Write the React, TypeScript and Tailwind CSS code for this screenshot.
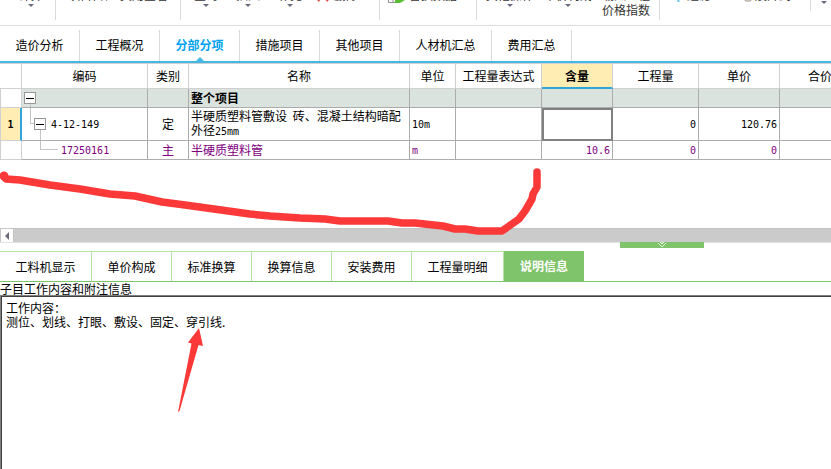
import type { ReactNode } from 'react';

const toolText = 'whitespace-nowrap text-[12px] leading-[14px] text-[#333]';

function Caret() {
  return (
    <svg width="6" height="3" viewBox="0 0 6 3" className="mt-[2px]" aria-hidden="true">
      <path d="M0 0h6L3 3z" fill="#6b6b80" />
    </svg>
  );
}

function Tool({ label, className, caret }: { label: string; className: string; caret?: boolean }) {
  return (
    <button type="button" className={`flex shrink-0 flex-col items-center ${toolText} ${className}`}>
      {label}
      {caret && <Caret />}
    </button>
  );
}

function Divider({ className }: { className: string }) {
  return <div className={`h-5 w-px shrink-0 bg-[#d9d9d9] ${className}`} />;
}

function Toolbar() {
  return (
    <div className="flex h-[26px] shrink-0 items-start overflow-hidden border-b border-[#dcdcdc]">
      <Tool label="计算" caret className="-mt-3 w-[61px]" />
      <Divider className="-ml-1.5" />
      <Tool label="项目自检" className="-mt-3 w-[72px]" />
      <Tool label="费用查看" className="-mt-3 w-[32px]" />
      <Divider className="ml-5" />
      <Tool label="查询" caret className="-mt-3 w-[50px]" />
      <Tool label="插入" caret className="-mt-3 w-[34px]" />
      <Tool label="补充" caret className="-mt-3 w-[50px]" />
      <svg width="12" height="12" viewBox="0 0 12 12" className="-mt-2.5 ml-[2px] shrink-0" aria-hidden="true">
        <path d="M1 1l10 10M11 1L1 11" stroke="#e8433f" strokeWidth="2" />
      </svg>
      <Tool label="删除" className="-mt-3 w-[34px]" />
      <Divider className="ml-4" />
      <svg width="18" height="14" viewBox="0 0 18 14" className="-mt-[11px] ml-2 shrink-0" aria-hidden="true">
        <path d="M.5.5h9v13h-9zM5 0v14M0 9h9" fill="#fff" stroke="#8f8f8f" />
        <path d="M7 9h5V6l5 5-5 3H7z" fill="#59bd35" />
      </svg>
      <Tool label="替换数据" className="-mt-3 ml-[2px] w-[50px]" />
      <Divider className="ml-[18px]" />
      <Tool label="其他操作" caret className="-mt-3 w-[66px]" />
      <Tool label="单价构成" caret className="-mt-3 w-[50px]" />
      <button
        type="button"
        className="-mt-[13px] ml-2 w-[50px] shrink-0 text-[12px] leading-[15px] text-[#333]"
      >
        载入工程
        <br />
        价格指数
      </button>
      <Divider className="ml-2" />
      <svg width="6" height="12" viewBox="0 0 6 12" className="-mt-2.5 ml-[14px] shrink-0" aria-hidden="true">
        <circle cx="3" cy="4" r="3" fill="#6bc9ee" />
        <path d="M2 6l3 6" stroke="#6bc9ee" strokeWidth="2" />
      </svg>
      <Tool label="过滤" className="-mt-3 ml-1 w-[30px]" />
      <svg width="8" height="12" viewBox="0 0 8 12" className="-mt-2.5 ml-[30px] shrink-0" aria-hidden="true">
        <rect x="1" y="1" width="6" height="10" rx="1" fill="#fdf0d2" stroke="#9b9393" />
      </svg>
      <Tool label="展开到" className="-mt-3 ml-[2px] w-[38px]" />
      <div className="ml-[18px] h-[11px] w-px shrink-0 bg-[#d9d9d9]" />
      <div className="-mt-px ml-2.5 shrink-0">
        <Caret />
      </div>
    </div>
  );
}

const mainTabs = [
  { label: '造价分析', width: 'w-20' },
  { label: '工程概况', width: 'w-20' },
  { label: '分部分项', width: 'w-20', active: true },
  { label: '措施项目', width: 'w-20' },
  { label: '其他项目', width: 'w-20' },
  { label: '人材机汇总', width: 'w-[92px]' },
  { label: '费用汇总', width: 'w-20' },
];

function MainTabs() {
  return (
    <nav className="flex h-[37px] shrink-0 border-b-2 border-[#45b8e4] pt-1">
      {mainTabs.map((t) => (
        <button
          key={t.label}
          type="button"
          className={`relative flex shrink-0 items-center justify-center border-r border-[#d9d9d9] pb-[2px] text-[12px] ${t.width} ${
            t.active ? 'font-bold text-[#00a2ee]' : 'text-black'
          }`}
        >
          {t.label}
          {t.active && (
            <svg
              width="8"
              height="4"
              viewBox="0 0 8 4"
              className="absolute bottom-0 left-1/2 -translate-x-1/2"
              aria-hidden="true"
            >
              <path d="M4 0l4 4H0z" fill="#45b8e4" />
            </svg>
          )}
        </button>
      ))}
    </nav>
  );
}

function Toggle() {
  return (
    <button
      type="button"
      aria-label="折叠"
      className="flex size-3 shrink-0 items-center justify-center border border-[#999] bg-white"
    >
      <span className="h-px w-2 bg-black" />
    </button>
  );
}

function Mono({ children }: { children: ReactNode }) {
  return <span className="font-['DejaVu_Sans_Mono',monospace] text-[10px]">{children}</span>;
}

const th = 'border-r border-b border-[#d0d0d0] p-0 font-normal';
const td = 'border-r border-b border-[#acacac] p-0';
const rowHead = 'border-r border-b border-l border-[#d0d0d0] p-0';

function BillTable() {
  return (
    <table className="w-[861px] table-fixed border-separate border-spacing-0 border-t border-[#d0d0d0] text-[12px] leading-[14px]">
      <colgroup>
        <col className="w-[22px]" />
        <col className="w-[126px]" />
        <col className="w-[41px]" />
        <col className="w-[221px]" />
        <col className="w-[46px]" />
        <col className="w-[86px]" />
        <col className="w-[71px]" />
        <col className="w-[86px]" />
        <col className="w-[81px]" />
        <col className="w-[81px]" />
      </colgroup>
      <thead>
        <tr className="h-[25px]">
          <th className={th} aria-label="序号" />
          <th className={th}>编码</th>
          <th className={th}>类别</th>
          <th className={th}>名称</th>
          <th className={th}>单位</th>
          <th className={th}>工程量表达式</th>
          <th className="border-r border-b-2 border-r-[#d0d0d0] border-b-[#2fa5d8] bg-[#ffedb3] p-0 font-bold">含量</th>
          <th className={th}>工程量</th>
          <th className={th}>单价</th>
          <th className={th}>合价</th>
        </tr>
      </thead>
      <tbody>
        <tr className="h-[19px] bg-[#dae3de]">
          <td className={`${rowHead} bg-white`} />
          <td className={td}>
            <div className="ml-[2px] flex h-[18px] w-3 flex-col items-center pt-[3px]">
              <Toggle />
              <div className="h-[3px] w-px bg-[#c4c4c4]" />
            </div>
          </td>
          <td className={td} />
          <td className={`${td} pl-[2px] font-bold`}>整个项目</td>
          <td className={td} />
          <td className={td} />
          <td className={td} />
          <td className={td} />
          <td className={td} />
          <td className={td} />
        </tr>
        <tr className="h-[33px]">
          <td className="border-r-2 border-b border-l border-r-[#2fa5d8] border-b-[#d0d0d0] border-l-[#d0d0d0] bg-[#ffedb3] p-0 text-center font-bold">
            <Mono>1</Mono>
          </td>
          <td className={td}>
            <div className="flex h-8 items-start pl-2">
              <div className="h-4 w-1 border-b border-l border-[#c4c4c4]" />
              <div className="flex h-8 w-3 flex-col items-center pt-2.5">
                <Toggle />
                <div className="h-2.5 w-px bg-[#c4c4c4]" />
              </div>
              <span className="self-center pl-[5px]">
                <Mono>4-12-149</Mono>
              </span>
            </div>
          </td>
          <td className={`${td} text-center`}>定</td>
          <td className={`${td} pl-[2px]`}>
            半硬质塑料管敷设 <span className="pl-[3px]">砖、混凝土结构暗配</span>
            <br />
            外径<Mono>25mm</Mono>
          </td>
          <td className={`${td} pl-[2px]`}>
            <Mono>10m</Mono>
          </td>
          <td className={td} />
          <td className={`${td} outline-2 -outline-offset-2 outline-[#808080]`}>
            <input aria-label="含量" className="block h-8 w-full bg-transparent px-1 text-right outline-none" />
          </td>
          <td className={`${td} pr-[2px] text-right`}>
            <Mono>0</Mono>
          </td>
          <td className={`${td} pr-[2px] text-right`}>
            <Mono>120.76</Mono>
          </td>
          <td className={td} />
        </tr>
        <tr className="h-[19px] text-[#800080]">
          <td className={rowHead} />
          <td className={td}>
            <div className="flex h-[18px] items-start pl-[18px]">
              <div className="h-[9px] w-[18px] border-b border-l border-[#c4c4c4]" />
              <span className="self-center pl-[3px]">
                <Mono>17250161</Mono>
              </span>
            </div>
          </td>
          <td className={`${td} text-center`}>主</td>
          <td className={`${td} pl-[2px]`}>半硬质塑料管</td>
          <td className={`${td} pl-[2px]`}>
            <Mono>m</Mono>
          </td>
          <td className={td} />
          <td className={`${td} pr-[2px] text-right`}>
            <Mono>10.6</Mono>
          </td>
          <td className={`${td} pr-[2px] text-right`}>
            <Mono>0</Mono>
          </td>
          <td className={`${td} pr-[2px] text-right`}>
            <Mono>0</Mono>
          </td>
          <td className={td} />
        </tr>
      </tbody>
    </table>
  );
}

function ScrollBar() {
  return (
    <div className="flex h-[15px] shrink-0 border-y border-t-[#c4c4c4] border-b-[#e2e2e2] bg-[#cbcbcb]">
      <button
        type="button"
        aria-label="向左滚动"
        className="flex w-3.5 items-center justify-center border-x border-[#c4c4c4] bg-white"
      >
        <svg width="4" height="8" viewBox="0 0 4 8" aria-hidden="true">
          <path d="M4 0v8L0 4z" fill="#6b6b78" />
        </svg>
      </button>
    </div>
  );
}

const detailTabs = [
  { label: '工料机显示', width: 'w-[92px]' },
  { label: '单价构成', width: 'w-20' },
  { label: '标准换算', width: 'w-20' },
  { label: '换算信息', width: 'w-20' },
  { label: '安装费用', width: 'w-20' },
  { label: '工程量明细', width: 'w-[92px]' },
];

function DetailTabs() {
  return (
    <nav className="flex h-[31px] shrink-0 border-b border-[#7fc36a] text-[12px]">
      {detailTabs.map((t) => (
        <button
          key={t.label}
          type="button"
          className={`shrink-0 border-t border-r border-[#b5e3a3] text-black ${t.width}`}
        >
          {t.label}
        </button>
      ))}
      <button type="button" className="w-20 shrink-0 bg-[#7fc36a] font-bold text-white">
        说明信息
      </button>
    </nav>
  );
}

function Markup() {
  return (
    <svg
      width="560"
      height="430"
      viewBox="0 0 560 430"
      className="pointer-events-none absolute top-0 left-0"
      aria-hidden="true"
    >
      <path
        d="M4 176L6 179L20 180L50 185L80 189L110 194L135 196L162 202L185 205L250 214L270 216L300 218L325 219L340 221H388L402 223H415L443 226L455 229H465L478 231H502L519 219L525 211L532 199L533 194L537 187V172"
        fill="none"
        stroke="#fb3938"
        strokeWidth="7.500"
        strokeLinecap="round"
        strokeLinejoin="round"
      />
      <circle cx="4" cy="176" r="4.500" fill="#fb3938" />
      <path d="M199 328L203 346L198.500 345L179.500 411L178 412L191.500 343.500L188 342.500Z" fill="#fb3938" />
    </svg>
  );
}

export default function App() {
  return (
    <div className="relative flex min-h-screen flex-col overflow-hidden bg-white font-['Noto_Sans_CJK_SC',sans-serif] text-black">
      <Toolbar />
      <MainTabs />
      <div className="h-[165px] shrink-0 overflow-hidden">
        <BillTable />
      </div>
      <ScrollBar />
      <div className="flex h-2 shrink-0 items-start">
        <button
          type="button"
          aria-label="收起"
          className="-mt-px ml-[620px] flex h-1.5 w-[84px] items-start justify-center bg-[#7fc36a]"
        >
          <svg width="10" height="6" viewBox="0 0 10 6" aria-hidden="true">
            <path d="M3 0h4L5 2zM1 1l4 4 4-4" fill="none" stroke="#e6f5e0" />
          </svg>
        </button>
      </div>
      <DetailTabs />
      <label htmlFor="note" className="block h-[13px] shrink-0 text-[12px] leading-[13px]">
        子目工作内容和附注信息
      </label>
      <div className="flex flex-1 border-t border-l border-[#808080]">
        <textarea
          id="note"
          readOnly
          className="block w-full resize-none border-t border-l border-[#404040] px-1 pt-1 text-[12px] leading-[14px] outline-none"
          defaultValue={'工作内容：\n测位、划线、打眼、敷设、固定、穿引线.'}
        />
      </div>
      <Markup />
    </div>
  );
}
